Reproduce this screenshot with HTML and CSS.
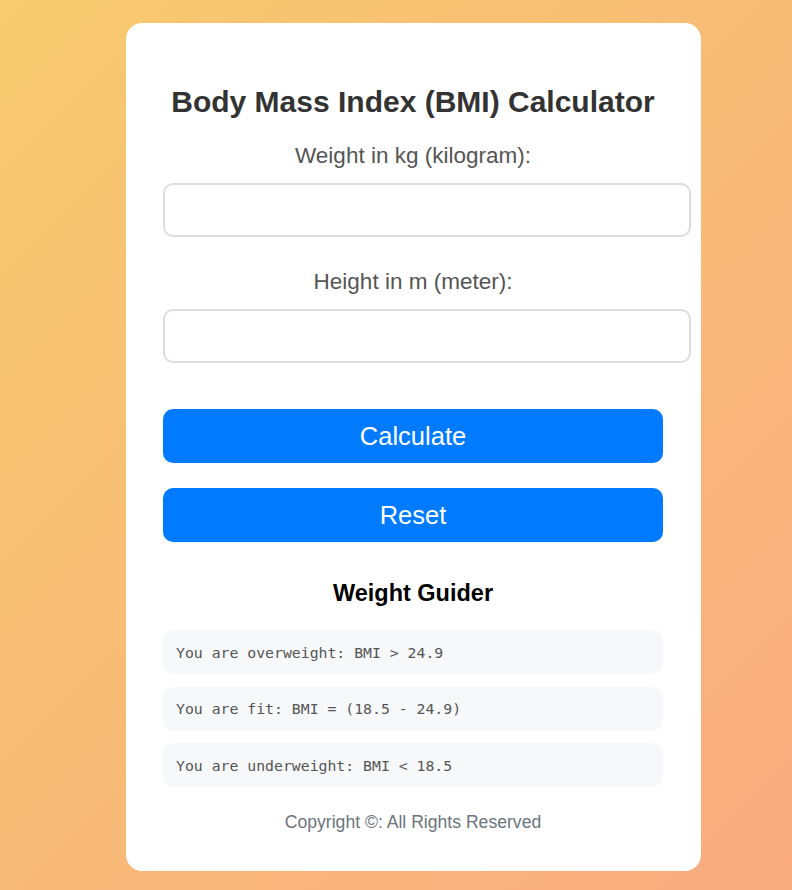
FILE: index.html
```html
<!DOCTYPE html>
<html lang="en">
<head>
<meta charset="utf-8">
<title>BMI Calculator</title>
<link rel="stylesheet" href="styles.css">
</head>
<body>
<main class="card">
  <h1 class="title">Body Mass Index (BMI) Calculator</h1>
  <form class="form">
    <label class="label" for="weight">Weight in kg (kilogram):</label>
    <input class="field" id="weight" type="text">
    <label class="label label-second" for="height">Height in m (meter):</label>
    <input class="field" id="height" type="text">
    <button class="btn btn-first" type="button">Calculate</button>
    <button class="btn" type="button">Reset</button>
  </form>
  <h2 class="guide-title">Weight Guider</h2>
  <ul class="guide-list">
    <li class="guide-item">You are overweight: BMI &gt; 24.9</li>
    <li class="guide-item">You are fit: BMI = (18.5 - 24.9)</li>
    <li class="guide-item">You are underweight: BMI &lt; 18.5</li>
  </ul>
  <p class="copyright">Copyright ©: All Rights Reserved</p>
</main>
</body>
</html>
```

FILE: styles.css
```css
* { box-sizing: content-box; }
html, body { margin: 0; padding: 0; }
body {
  min-height: 890px;
  background: linear-gradient(135deg, #f7cb6e 0%, #f9ab80 100%);
  font-family: "Liberation Sans", Arial, sans-serif;
  display: flex;
  align-items: flex-start;
}
.card {
  width: 500px;
  margin: 23px 0 0 126px;
  padding: 37px 38px 39px 37px;
  background: #fff;
  border-radius: 16px;
  text-align: center;
}
.title {
  margin: 25px 0 0;
  font-size: 30px;
  line-height: 34px;
  font-weight: 700;
  color: #333;
}
.form {
  display: flex;
  flex-direction: column;
  align-items: flex-start;
  margin-top: 24px;
}
.label {
  display: block;
  width: 100%;
  font-size: 22.5px;
  line-height: 26px;
  color: #555;
  margin-bottom: 14px;
}
.label-second { margin-top: 32px; }
.field {
  display: block;
  width: 500px;
  height: 26px;
  padding: 12px;
  border: 2px solid #ddd;
  border-radius: 10px;
  font-size: 20px;
  background: #fff;
  margin: 0;
  outline: none;
}
.btn {
  display: block;
  width: 500px;
  height: 54px;
  padding: 0;
  border: none;
  border-radius: 10px;
  background: #007bff;
  color: #fff;
  font-family: "Liberation Sans", Arial, sans-serif;
  font-size: 25.5px;
  margin-top: 25px;
}
.btn-first { margin-top: 46px; }
.guide-title {
  margin: 37px 0 0;
  font-size: 23.5px;
  line-height: 28px;
  font-weight: 700;
  color: #000;
}
.guide-list {
  list-style: none;
  margin: 23px 0 0;
  padding: 0;
  display: flex;
  flex-direction: column;
  gap: 12.5px;
}
.guide-item {
  height: 44px;
  display: flex;
  align-items: center;
  padding: 0 13px;
  background: #f7f8fa;
  border-radius: 10px;
  font-family: "DejaVu Sans Mono", "Liberation Mono", monospace;
  font-size: 14.8px;
  color: #555;
  text-align: left;
}
.copyright {
  margin: 25px 0 0;
  font-size: 17.6px;
  line-height: 20px;
  color: #6c757d;
}
```
